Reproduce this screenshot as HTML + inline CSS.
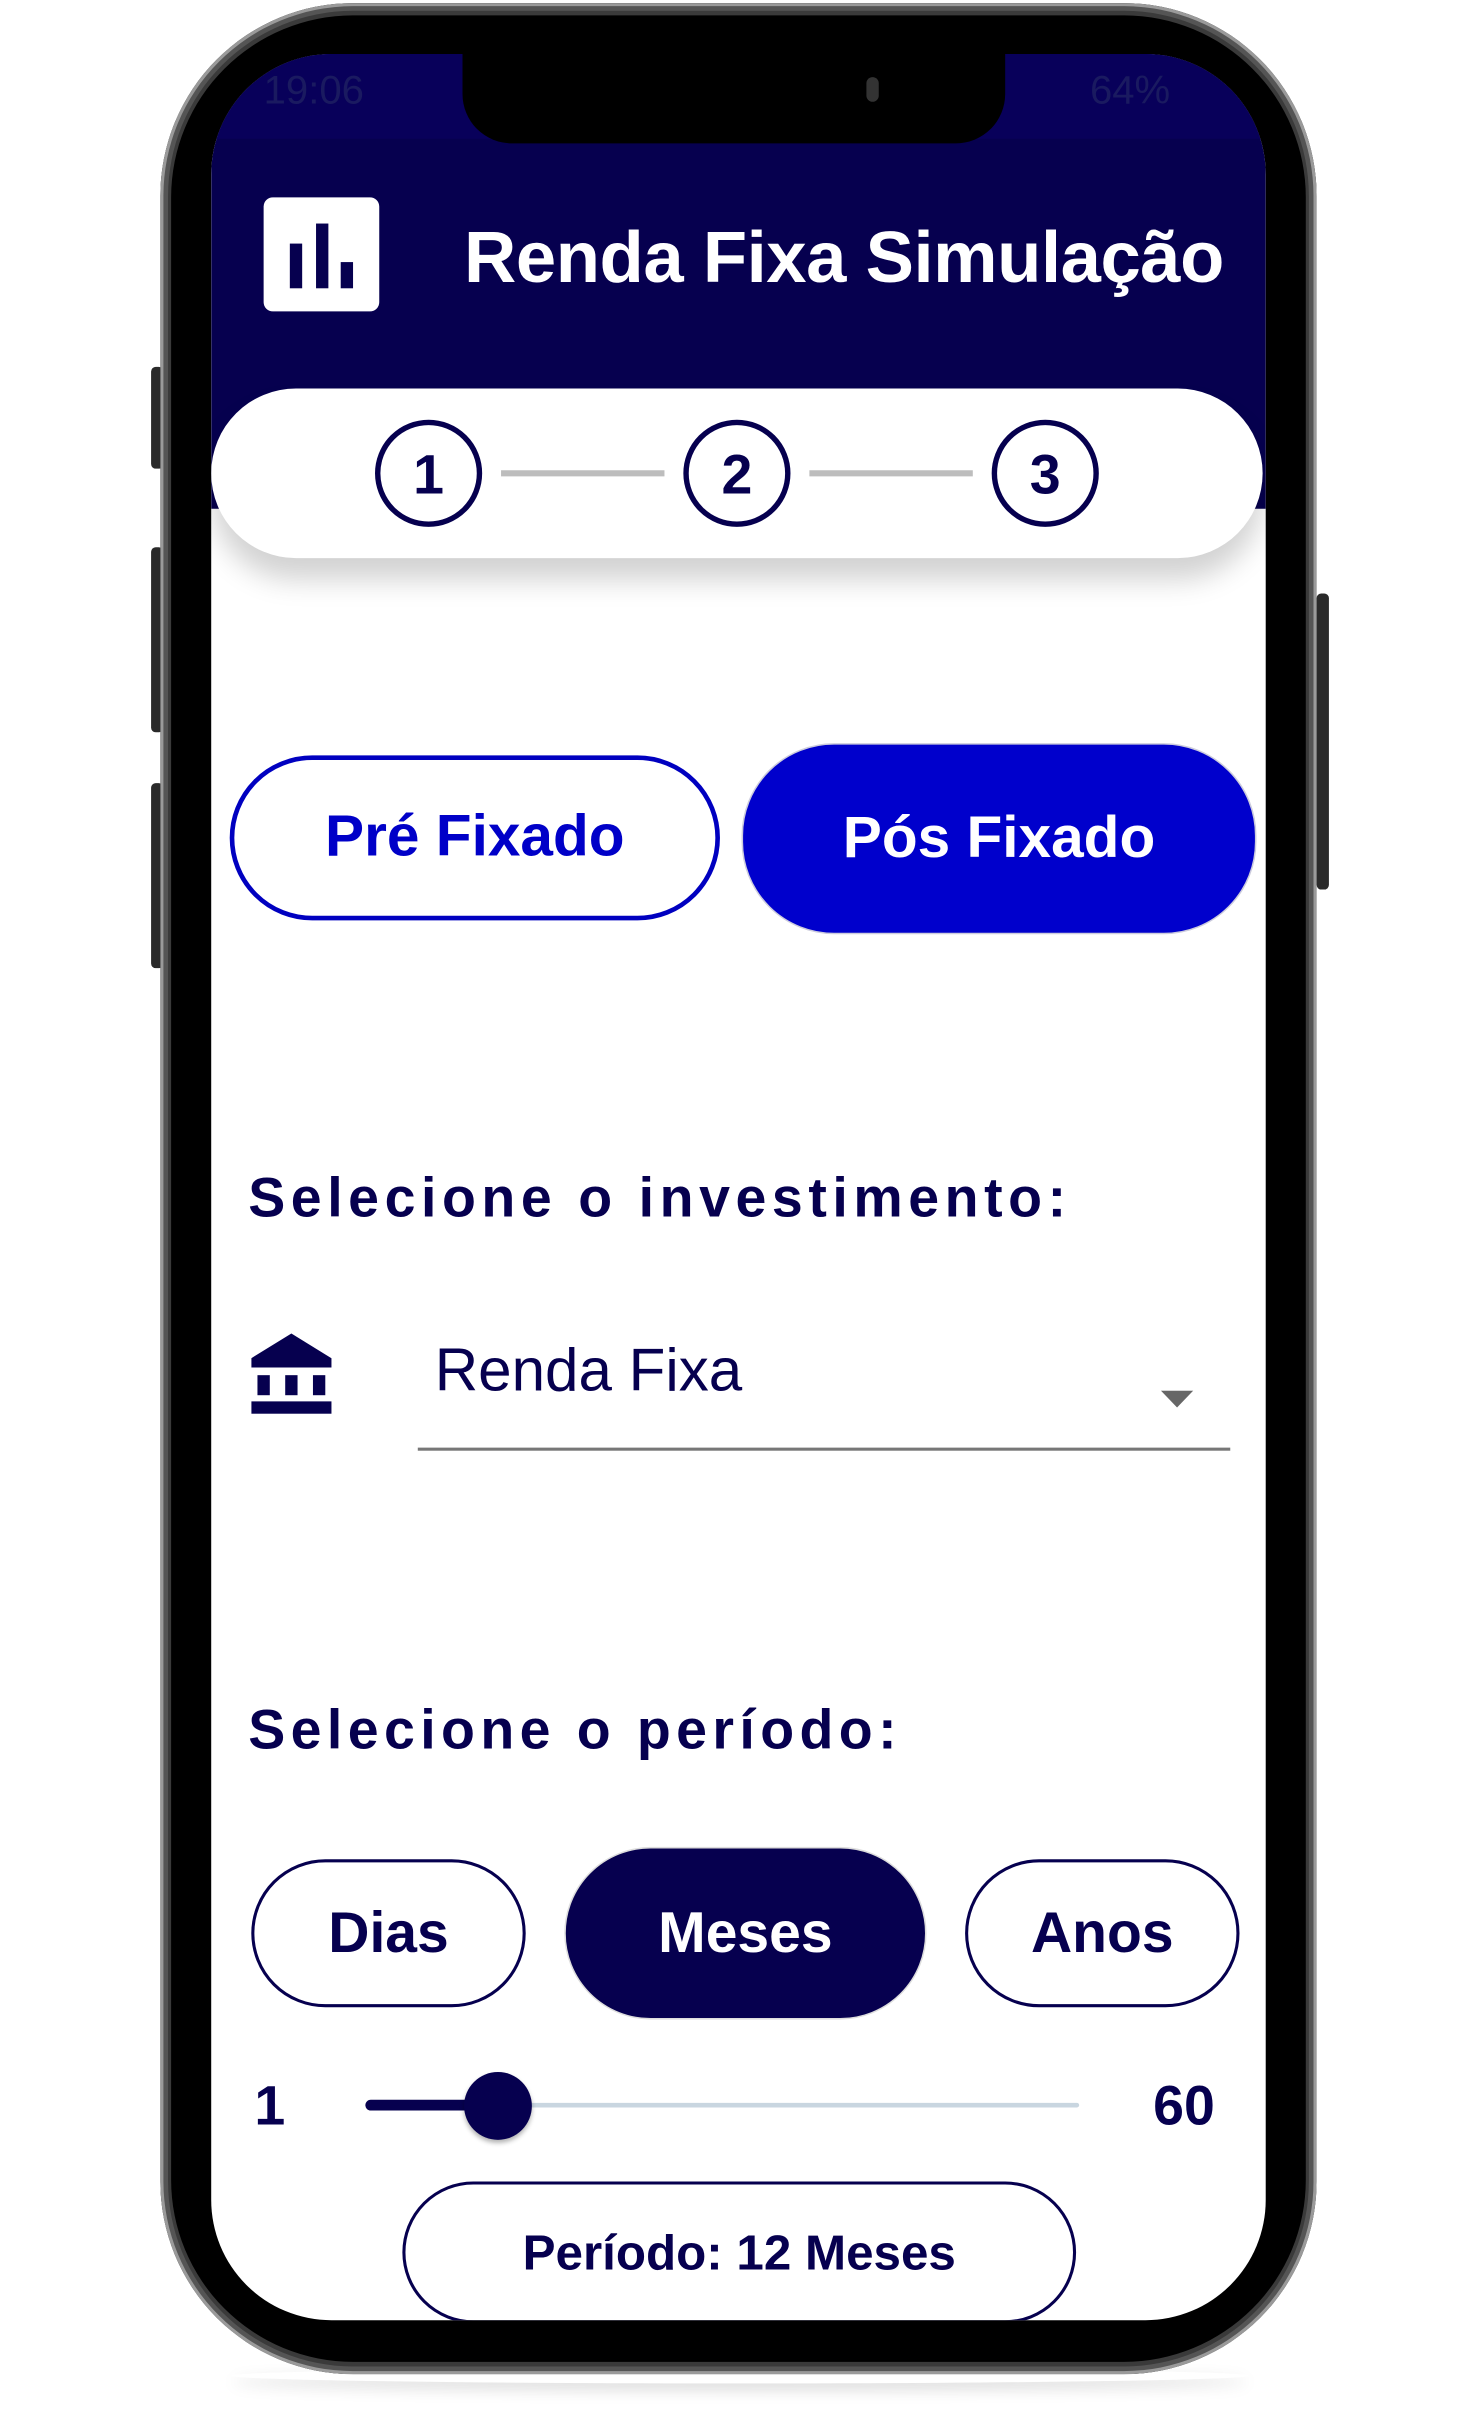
<!DOCTYPE html>
<html><head><meta charset="utf-8"><style>
html,body{margin:0;padding:0;background:#fff;}
body{width:1480px;height:2410px;overflow:hidden;position:relative;}
#w{position:absolute;left:0;top:0;width:960px;height:1563px;transform:scale(1.54167);transform-origin:0 0;font-family:"Liberation Sans",sans-serif;}
.a{position:absolute;}
.nv{color:#06004f;}
.btn{position:absolute;box-sizing:border-box;border-radius:60px;display:flex;align-items:center;justify-content:center;font-weight:bold;}
</style></head><body><div id="w">
<div class="a" style="left:150px;top:1536px;width:660px;height:10px;border-radius:50%;box-shadow:0 4px 10px rgba(0,0,0,0.15);"></div>
<div class="a" style="left:98px;top:238px;width:8px;height:66px;background:#2a2a2a;border-radius:3px;"></div>
<div class="a" style="left:98px;top:355px;width:8px;height:120px;background:#2a2a2a;border-radius:3px;"></div>
<div class="a" style="left:98px;top:508px;width:8px;height:120px;background:#2a2a2a;border-radius:3px;"></div>
<div class="a" style="left:854px;top:385px;width:8px;height:192px;background:#2a2a2a;border-radius:3px;"></div>
<div class="a" style="left:104px;top:2px;width:750px;height:1538px;border-radius:125px;background:#3a3a3a;box-shadow:inset 0 0 0 2px #9a9a9a,inset 0 0 0 5px #555;"></div>
<div class="a" style="left:111px;top:10px;width:736px;height:1522px;border-radius:118px;background:#000;"></div>
<div class="a" style="left:137px;top:35px;width:684px;height:1470px;border-radius:78px;background:#fff;overflow:hidden;">
  <div class="a" style="left:0;top:0;width:684px;height:295px;background:#06004f;"></div>
  <div class="a" style="left:0;top:0;width:684px;height:55px;background:#08005a;"></div>
  <div class="a" style="left:34px;top:8px;font-size:26px;color:#1a1a60;">19:06</div>
  <div class="a" style="left:570px;top:8px;font-size:26px;color:#1a1a60;">64%</div>
  <div class="a" style="left:34px;top:93px;width:75px;height:74px;background:#fff;border-radius:6px;">
    <div class="a" style="left:17px;top:30px;width:8px;height:29px;background:#06004f;"></div>
    <div class="a" style="left:34px;top:17px;width:8px;height:42px;background:#06004f;"></div>
    <div class="a" style="left:50px;top:42px;width:8px;height:17px;background:#06004f;"></div>
  </div>
  <div class="a" style="left:164px;top:104px;font-size:47px;font-weight:bold;color:#fff;white-space:nowrap;letter-spacing:-0.3px;">Renda Fixa Simulação</div>
  <div class="a" style="left:0;top:217px;width:682px;height:110px;background:#fff;border-radius:56px;box-shadow:0 14px 18px rgba(0,0,0,0.18);"></div>
  <svg class="a" style="left:0;top:217px" width="684" height="110">
    <line x1="188" y1="55" x2="294" y2="55" stroke="#bdbdbd" stroke-width="4"/>
    <line x1="388" y1="55" x2="494" y2="55" stroke="#bdbdbd" stroke-width="4"/>
    <g fill="none" stroke="#06004f" stroke-width="3.5">
      <circle cx="141" cy="55" r="33"/><circle cx="341" cy="55" r="33"/><circle cx="541" cy="55" r="33"/>
    </g>
    <g font-family="Liberation Sans" font-weight="bold" font-size="36" fill="#06004f" text-anchor="middle">
      <text x="141" y="68">1</text><text x="341" y="68">2</text><text x="541" y="68">3</text>
    </g>
  </svg>
</div>
<div class="a" style="left:300px;top:30px;width:352px;height:63px;background:#000;border-radius:0 0 32px 32px;"></div>
<div class="a" style="left:562px;top:50px;width:8px;height:16px;background:#333;border-radius:4px;"></div>
<div class="btn" style="left:149px;top:490px;width:318px;height:107px;border:3px solid #0000c0;color:#0000c8;font-size:38px;">Pré Fixado</div>
<div class="btn" style="left:481px;top:482px;width:334px;height:124px;background:#0000cc;border:1px solid #ccd;color:#fff;font-size:38px;">Pós Fixado</div>
<div class="a nv" style="left:161px;top:756px;font-size:36px;font-weight:bold;letter-spacing:3.6px;white-space:nowrap;">Selecione o investimento:</div>
<svg class="a" style="left:163px;top:865px" width="54" height="54" viewBox="0 0 54 54">
  <path d="M0 16 L26 0 L52 16 L52 22 L0 22 Z" fill="#06004f"/>
  <rect x="4" y="27" width="8" height="13" fill="#06004f"/>
  <rect x="22" y="27" width="8" height="13" fill="#06004f"/>
  <rect x="40" y="27" width="8" height="13" fill="#06004f"/>
  <rect x="0" y="44" width="52" height="8" fill="#06004f"/>
</svg>
<div class="a nv" style="left:282px;top:868px;font-size:39px;white-space:nowrap;">Renda Fixa</div>
<svg class="a" style="left:753px;top:902px" width="22" height="12"><path d="M0 0 L21 0 L10.5 11 Z" fill="#666"/></svg>
<div class="a" style="left:271px;top:939px;width:527px;height:2px;background:#777;"></div>
<div class="a nv" style="left:161px;top:1101px;font-size:36px;font-weight:bold;letter-spacing:3.5px;white-space:nowrap;">Selecione o período:</div>
<div class="btn nv" style="left:163px;top:1206px;width:178px;height:96px;border:2.5px solid #06004f;font-size:37px;">Dias</div>
<div class="btn" style="left:366px;top:1198px;width:235px;height:112px;background:#06004f;border:1px solid #ddd;color:#fff;font-size:37px;">Meses</div>
<div class="btn nv" style="left:626px;top:1206px;width:178px;height:96px;border:2.5px solid #06004f;font-size:37px;">Anos</div>
<div class="a nv" style="left:165px;top:1345px;font-size:36px;font-weight:bold;">1</div>
<div class="a" style="left:310px;top:1364px;width:390px;height:3px;background:#c9d6e0;border-radius:2px;"></div>
<div class="a" style="left:237px;top:1362px;width:88px;height:7px;background:#06004f;border-radius:4px;"></div>
<div class="a" style="left:301px;top:1344px;width:44px;height:44px;background:#06004f;border-radius:50%;box-shadow:0 2px 3px rgba(0,0,0,0.3);"></div>
<div class="a nv" style="left:748px;top:1345px;font-size:36px;font-weight:bold;">60</div>
<div class="a" style="left:137px;top:1400px;width:684px;height:105px;overflow:hidden;border-radius:0 0 78px 78px;">
  <div class="btn nv" style="left:124px;top:15px;width:437px;height:92px;border:2.5px solid #06004f;font-size:32px;">Período: 12 Meses</div>
</div>
</div></body></html>
